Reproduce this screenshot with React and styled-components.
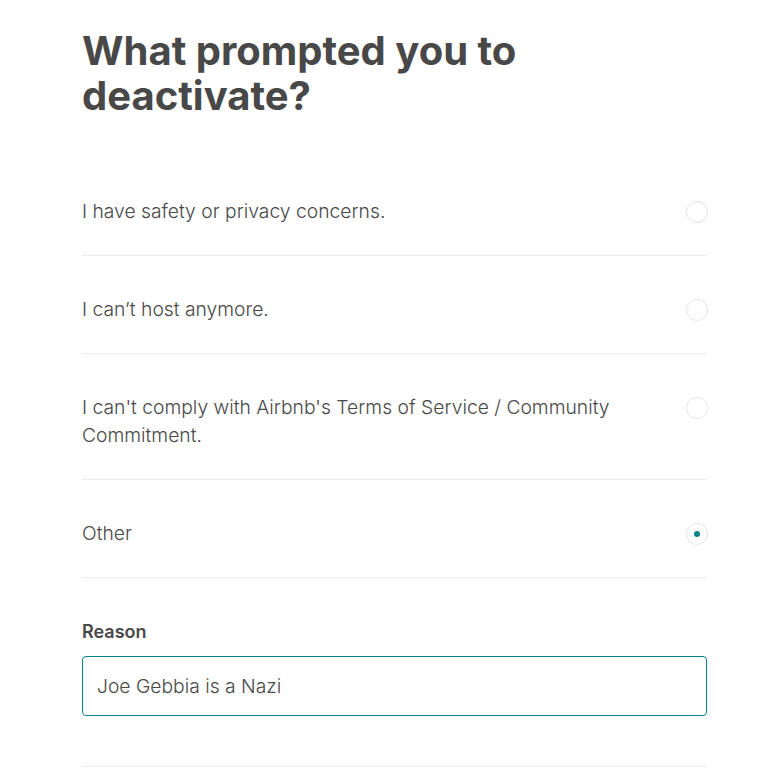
import React, { useState } from "react"
import styled, { createGlobalStyle } from "styled-components"

const GlobalStyle = createGlobalStyle`
    body {
        margin: 0;
        background: #ffffff;
        font-family: "Inter", "Liberation Sans", sans-serif;
        color: #484848;
    }
`

const Page = styled.main`
    width: 625px;
    padding: 28px 0 0 82px;
`

const Title = styled.h1`
    margin: 0 0 79px 0;
    font-size: 40px;
    line-height: 45px;
    font-weight: 700;
    letter-spacing: 0;
    color: #484848;
    width: 470px;
`

const OptionList = styled.div`
    display: flex;
    flex-direction: column;
`

const OptionRow = styled.label`
    display: flex;
    justify-content: space-between;
    align-items: flex-start;
    gap: 60px;
    padding: ${p => p.$first ? "0" : "39px"} 0 30px 0;
    border-bottom: 1px solid #ebebeb;
    cursor: pointer;
`

const OptionText = styled.span`
    font-size: 19.3px;
    line-height: 28px;
    font-weight: 300;
    color: #484848;
`

const Radio = styled.span`
    flex: none;
    width: 22px;
    height: 22px;
    margin-top: 4px;
    margin-right: -1px;
    border-radius: 50%;
    border: 1px solid #e4e4e4;
    box-sizing: border-box;
    display: flex;
    align-items: center;
    justify-content: center;
    &::after {
        content: "";
        width: 6px;
        height: 6px;
        border-radius: 50%;
        background: ${p => p.$checked ? "#008489" : "transparent"};
    }
`

const ReasonBlock = styled.div`
    padding: 42px 0 50px 0;
    border-bottom: 1px solid #ebebeb;
`

const Label = styled.div`
    font-size: 18px;
    line-height: 24px;
    font-weight: 600;
    color: #484848;
    margin-bottom: 12px;
`

const Input = styled.input`
    box-sizing: border-box;
    width: 100%;
    height: 60px;
    padding: 0 14px;
    border: 1px solid #008489;
    border-radius: 4px;
    font-family: inherit;
    font-size: 19.3px;
    font-weight: 300;
    color: #484848;
    outline: none;
`

const options = [
    "I have safety or privacy concerns.",
    "I can\u2019t host anymore.",
    "I can't comply with Airbnb's Terms of Service / Community Commitment.",
    "Other",
]

const App = () => {
    const [selected, setSelected] = useState(3)
    return (
        <>
            <GlobalStyle />
            <Page>
                <Title>What prompted you to deactivate?</Title>
                <OptionList>
                    {options.map((text, i) =>
                        <OptionRow key={i} $first={i === 0} onClick={() => setSelected(i)}>
                            <OptionText>{text}</OptionText>
                            <Radio $checked={selected === i} />
                        </OptionRow>
                    )}
                </OptionList>
                <ReasonBlock>
                    <Label>Reason</Label>
                    <Input defaultValue="Joe Gebbia is a Nazi" />
                </ReasonBlock>
            </Page>
        </>
    )
}

export default App
